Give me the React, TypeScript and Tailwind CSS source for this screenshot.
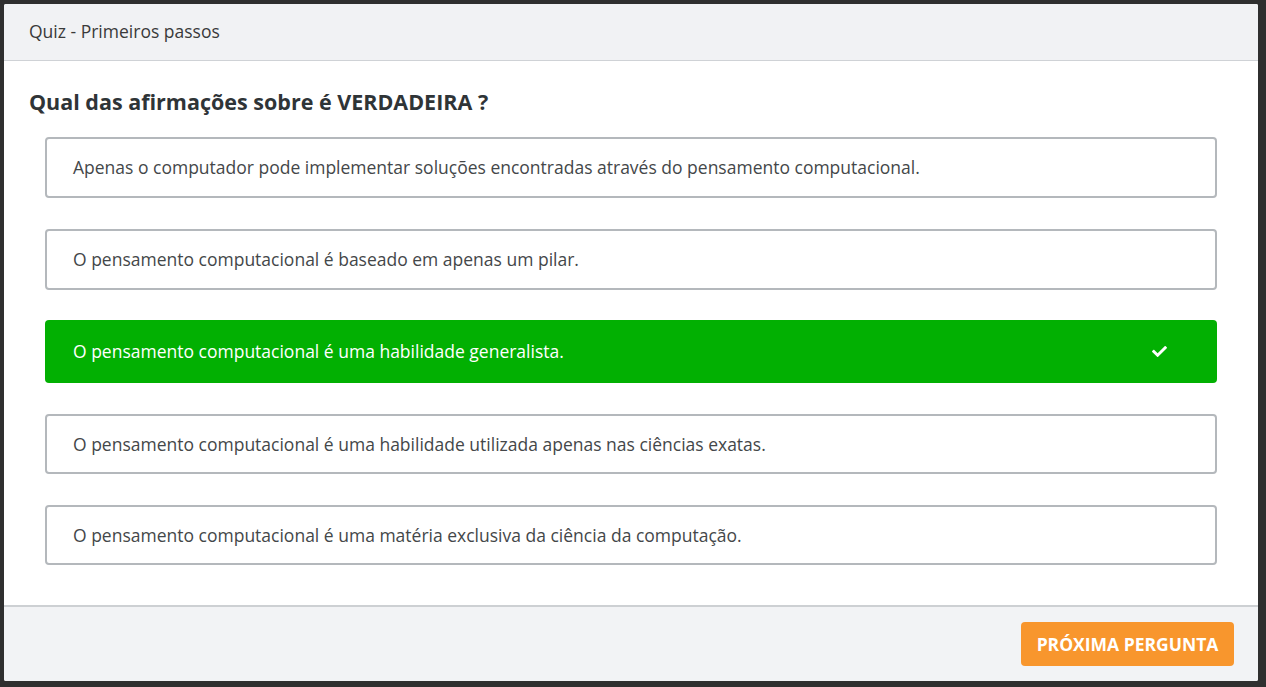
import React from "react";
import { FaCheck } from "react-icons/fa";

const options = [
  { text: "Apenas o computador pode implementar soluções encontradas através do pensamento computacional.", correct: false },
  { text: "O pensamento computacional é baseado em apenas um pilar.", correct: false },
  { text: "O pensamento computacional é uma habilidade generalista.", correct: true },
  { text: "O pensamento computacional é uma habilidade utilizada apenas nas ciências exatas.", correct: false },
  { text: "O pensamento computacional é uma matéria exclusiva da ciência da computação.", correct: false },
];

export default function App() {
  return (
    <div
      className="h-[687px] w-full bg-[#2f2f2f] pt-[4px] pl-[4px] pr-[8px] pb-[6px]"
      style={{ fontFamily: '"Open Sans", "Noto Sans", sans-serif' }}
    >
      <div className="flex h-full flex-col overflow-hidden rounded-[2px] bg-white">
        <div className="flex h-[57px] items-center border-b border-[#cfd2d6] bg-[#f1f2f4] px-[25px] pb-[1px]">
          <span className="text-[17.5px] text-[#3a3a3a]">Quiz - Primeiros passos</span>
        </div>
        <div className="px-[25px] pt-[26px] pb-[40px]">
          <h1 className="mb-[20px] text-[21.5px] font-bold leading-[30px] text-[#2f3437]">
            Qual das afirmações sobre é VERDADEIRA ?
          </h1>
          <div className="flex flex-col gap-[31px] px-[16px]">
            {options.map((o, i) =>
              o.correct ? (
                <div
                  key={i}
                  className="-mt-[1px] flex h-[63px] items-center justify-between rounded-[4px] bg-[#02b002] pl-[28px] pr-[50px] text-[17.5px] font-medium text-white"
                >
                  <span>{o.text}</span>
                  <FaCheck className="h-[15px] w-[15px] text-white" />
                </div>
              ) : (
                <div
                  key={i}
                  className={`flex ${i > 2 ? "h-[60px]" : "h-[61px]"} items-center rounded-[4px] border-2 border-[#b4b8bc] bg-white pl-[26px] text-[17.5px] text-[#444749]`}
                >
                  <span>{o.text}</span>
                </div>
              )
            )}
          </div>
        </div>
        <div className="flex flex-1 items-start justify-end border-t-2 border-[#cdd0d3] bg-[#f2f3f5] pt-[15px] pr-[24px]">
          <button className="flex h-[44px] w-[213px] items-center justify-center rounded-[4px] bg-[#f8962d] text-[17.5px] font-bold text-white">
            PRÓXIMA PERGUNTA
          </button>
        </div>
      </div>
    </div>
  );
}
